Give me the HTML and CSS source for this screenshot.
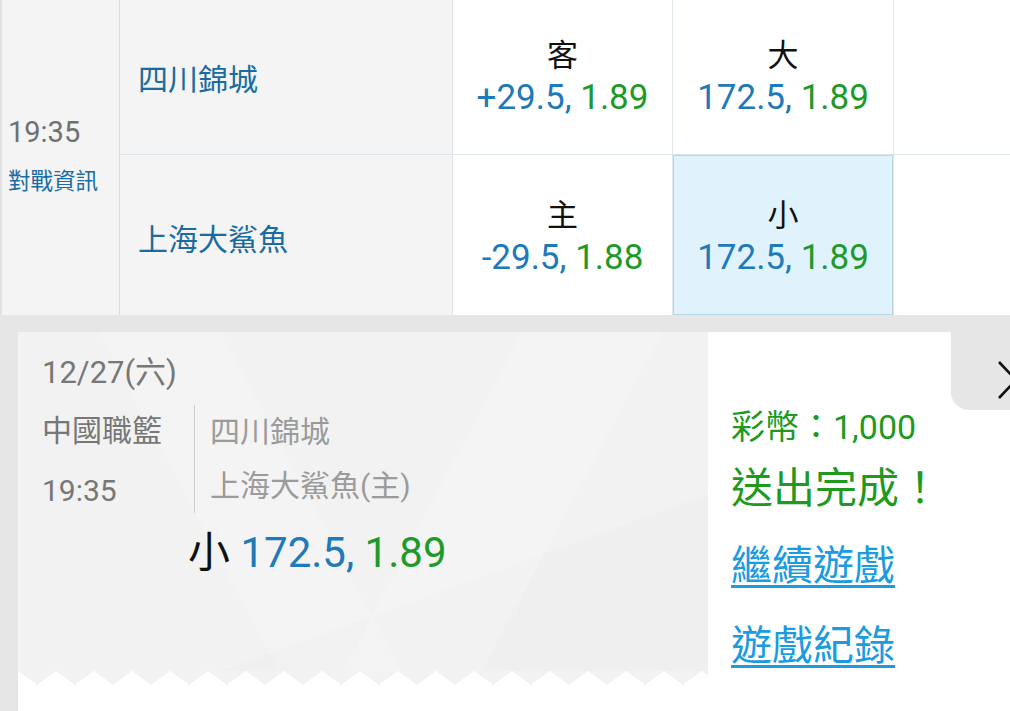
FILE: index.html
```html
<!DOCTYPE html>
<html lang="zh-Hant">
<head>
<meta charset="utf-8">
<title>投注完成</title>
<link rel="stylesheet" href="styles.css">
</head>
<body>
<div class="odds">
  <div class="time-cell">
    <div class="kick">19:35</div>
    <a class="info">對戰資訊</a>
  </div>
  <div class="team row1">四川錦城</div>
  <div class="bet row1">
    <div class="side">客</div>
    <div class="val"><span class="blue">+29.5,</span> <span class="green">1.89</span></div>
  </div>
  <div class="bet row1">
    <div class="side">大</div>
    <div class="val"><span class="blue">172.5,</span> <span class="green">1.89</span></div>
  </div>
  <div class="blank row1"></div>

  <div class="team row2">上海大鯊魚</div>
  <div class="bet row2">
    <div class="side">主</div>
    <div class="val"><span class="blue">-29.5,</span> <span class="green">1.88</span></div>
  </div>
  <div class="bet row2 selected">
    <div class="side">小</div>
    <div class="val"><span class="blue">172.5,</span> <span class="green">1.89</span></div>
  </div>
  <div class="blank row2"></div>
</div>

<section class="panel">
  <div class="card">
    <div class="ticket">
      <div class="ticket-body">
        <div class="date">12/27(六)</div>
        <div class="match">
          <div class="league">
            <div>中國職籃</div>
            <div>19:35</div>
          </div>
          <div class="teams">
            <div>四川錦城</div>
            <div>上海大鯊魚(主)</div>
          </div>
        </div>
        <div class="pick">小 <span class="blue">172.5,</span> <span class="green">1.89</span></div>
      </div>
      <div class="zigzag"></div>
    </div>
    <div class="result">
      <div class="coins">彩幣：1,000</div>
      <div class="done">送出完成！</div>
      <a class="link">繼續遊戲</a>
      <a class="link">遊戲紀錄</a>
    </div>
  </div>
  <button class="close" aria-label="關閉">
    <svg width="40" height="40" viewBox="0 0 40 40"><path d="M2 2 L36 38 M36 2 L2 38" stroke="#111" stroke-width="2.6" fill="none"/></svg>
  </button>
</section>
</body>
</html>
```

FILE: styles.css
```css
* { box-sizing: border-box; }

html, body {
  margin: 0;
  padding: 0;
  width: 1010px;
  height: 711px;
  overflow: hidden;
  background: #ffffff;
  font-family: Roboto, "Noto Sans CJK TC", "Noto Sans", sans-serif;
}

.blue { color: #2079b8; }
.green { color: #1f9a2a; }

/* ---------- odds table ---------- */
.odds {
  display: grid;
  grid-template-columns: 120px 333px 220px 221px 1fr;
  grid-template-rows: 155px 160px;
}

.time-cell {
  grid-row: 1 / span 2;
  background: #f4f4f4;
  border-left: 2px solid #e2e2e2;
  border-right: 1px solid #d9dcde;
  padding: 112px 0 0 6px;
  display: flex;
  flex-direction: column;
}

.kick {
  font-size: 29px;
  line-height: 40px;
  color: #707070;
}

.info {
  margin-top: 14px;
  font-size: 22.5px;
  line-height: 30px;
  color: #1a6ba2;
}

.team {
  background: #f4f4f4;
  border-right: 1px solid #dde3e7;
  display: flex;
  align-items: center;
  padding-left: 18px;
  font-size: 30px;
  color: #1a6b9e;
}

.team.row2 { padding-top: 4px; }

.row1 { border-bottom: 1px solid #dbe4ea; }

.bet {
  background: #ffffff;
  border-right: 1px solid #dfe7ec;
  display: flex;
  flex-direction: column;
  align-items: center;
  justify-content: center;
  text-align: center;
}

.bet.row2 { padding-top: 4px; }

.side {
  font-size: 31px;
  line-height: 42px;
  color: #111;
}

.val {
  font-size: 35px;
  line-height: 42px;
  white-space: nowrap;
}

.bet.selected {
  background: #e0f3fc;
  box-shadow: inset 0 0 0 1px #bad7e8;
}

.blank { background: #ffffff; }

/* ---------- panel ---------- */
.panel {
  position: relative;
  background: #e6e6e6;
  padding: 17px 0 0 18px;
  height: 396px;
}

.card {
  display: flex;
  height: 379px;
  background: #ffffff;
}

.ticket {
  flex: 0 0 690px;
  align-self: flex-start;
  display: flex;
  flex-direction: column;
}

.ticket-body {
  height: 339px;
  padding: 21px 0 0 24px;
  background-color: #f2f2f2;
  background-image:
    linear-gradient(118deg, rgba(255,255,255,0) 0 58%, rgba(255,255,255,0.18) 58% 74%, rgba(255,255,255,0) 74%),
    linear-gradient(62deg, rgba(255,255,255,0) 0 30%, rgba(255,255,255,0.14) 30% 44%, rgba(255,255,255,0) 44%),
    linear-gradient(160deg, rgba(0,0,0,0) 0 70%, rgba(0,0,0,0.01) 70%);
  color: #777;
}

.zigzag {
  height: 14px;
  background: conic-gradient(from -53.6deg at 50% 100%, #f2f2f2 107.2deg, transparent 0) 0 0 / 38px 14px repeat-x;
}

.date {
  font-size: 31px;
  line-height: 40px;
}

.match {
  display: flex;
  margin-top: 8px;
}

.league {
  width: 152px;
  font-size: 30px;
  line-height: 60px;
}

.teams {
  margin-top: 4px;
  height: 108px;
  border-left: 1px solid #d0d0d0;
  padding-left: 15px;
  font-size: 30px;
  line-height: 54px;
  color: #9b9b9b;
}

.pick {
  margin: 7px 0 0 146px;
  font-size: 42px;
  line-height: 50px;
  color: #111;
  white-space: nowrap;
}

.result {
  flex: 1;
  padding: 72px 0 0 23px;
  display: flex;
  flex-direction: column;
  align-items: flex-start;
}

.coins {
  font-size: 34px;
  line-height: 46px;
  color: #1f9a1f;
}

.done {
  margin-top: 14px;
  font-size: 42px;
  line-height: 50px;
  color: #1f9a1f;
}

.link {
  font-size: 41px;
  line-height: 52px;
  color: #1b9be0;
  text-decoration: underline;
  text-decoration-thickness: 3px;
  text-underline-offset: 5px;
}

.link:first-of-type { margin-top: 26px; }
.link + .link { margin-top: 28px; }

.close {
  position: absolute;
  top: 0;
  right: 0;
  width: 59px;
  height: 95px;
  border: 0;
  padding: 35px 0 0 46px;
  margin: 0;
  background: #e6e6e6;
  border-bottom-left-radius: 18px;
  overflow: hidden;
  display: block;
  text-align: left;
}

.close svg { display: block; }
```
